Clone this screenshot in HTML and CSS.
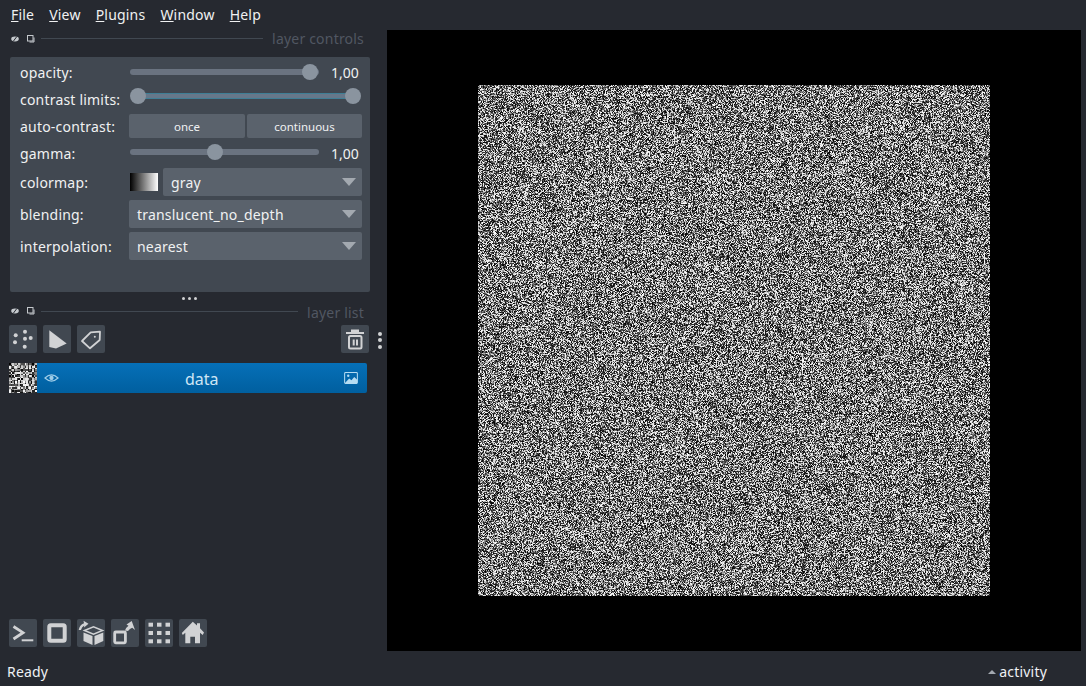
FILE: index.html
```html
<!DOCTYPE html>
<html lang="en">
<head>
<meta charset="utf-8">
<title>napari</title>
<link rel="stylesheet" href="styles.css">
</head>
<body>
<div class="app">
  <nav class="menubar">
    <span class="menu"><u>F</u>ile</span>
    <span class="menu"><u>V</u>iew</span>
    <span class="menu"><u>P</u>lugins</span>
    <span class="menu"><u>W</u>indow</span>
    <span class="menu"><u>H</u>elp</span>
  </nav>
  <div class="main">
    <aside class="side">
      <div class="dock-title controls-title">
        <svg class="mini" viewBox="0 0 8 8"><ellipse cx="4" cy="4" rx="3.8" ry="2.400" fill="#c4c8cc"/><path d="M2.500 6 5.500 2" stroke="#262930"/></svg>
        <svg class="mini" viewBox="0 0 8 8"><rect x=".5" y=".5" width="5.500" height="5.500" fill="none" stroke="#c4c8cc"/><path d="M7 2.500V7H2.500" fill="none" stroke="#c4c8cc"/></svg>
        <span class="rule"></span><span class="dock-label">layer controls</span>
      </div>
      <section class="controls">
        <div class="row r-op"><label>opacity:</label><div class="slider"><div class="track"></div><div class="handle" style="left:173px"></div></div><span class="val">1,00</span></div>
        <div class="row r-cl"><label>contrast limits:</label><div class="slider wide"><div class="track range"></div><div class="handle" style="left:1px"></div><div class="handle" style="left:216px"></div></div></div>
        <div class="row r-ac"><label>auto-contrast:</label><div class="btns"><button class="btn">once</button><button class="btn">continuous</button></div></div>
        <div class="row r-ga"><label>gamma:</label><div class="slider"><div class="track"></div><div class="handle" style="left:78px"></div></div><span class="val">1,00</span></div>
        <div class="row r-dd"><label>colormap:</label><div class="cmap"></div><div class="dd dd-cm">gray<i class="arrow"></i></div></div>
        <div class="row r-dd"><label>blending:</label><div class="dd">translucent_no_depth<i class="arrow"></i></div></div>
        <div class="row r-dd"><label>interpolation:</label><div class="dd">nearest<i class="arrow"></i></div></div>
      </section>
      <div class="handle-dots"><b></b><b></b><b></b></div>
      <div class="dock-title list-title">
        <svg class="mini" viewBox="0 0 8 8"><ellipse cx="4" cy="4" rx="3.8" ry="2.400" fill="#c4c8cc"/><path d="M2.500 6 5.500 2" stroke="#262930"/></svg>
        <svg class="mini" viewBox="0 0 8 8"><rect x=".5" y=".5" width="5.500" height="5.500" fill="none" stroke="#c4c8cc"/><path d="M7 2.500V7H2.500" fill="none" stroke="#c4c8cc"/></svg>
        <span class="rule"></span><span class="dock-label">layer list</span>
      </div>
      <div class="layer-tools">
        <button class="tool"><svg viewBox="0 0 28 28" fill="#d1d2d4"><circle cx="16" cy="6.700" r="2"/><circle cx="6.700" cy="10.300" r="2"/><circle cx="21.700" cy="13" r="2"/><circle cx="16" cy="13.700" r="2"/><circle cx="6" cy="17.300" r="2"/><circle cx="15.700" cy="21.700" r="2"/></svg></button>
        <button class="tool"><svg viewBox="0 0 28 28"><path d="M6.300 5.200 23.700 18.500 13 23.500 6.300 22z" fill="#d1d2d4"/></svg></button>
        <button class="tool"><svg viewBox="0 0 28 28" fill="none" stroke="#d1d2d4" stroke-width="1.800" stroke-linejoin="round"><path d="M5 16 13.700 7.300 23 6.700 22.700 15 13 23.300z"/><circle cx="17.800" cy="11.700" r="1" fill="#d1d2d4" stroke="none"/></svg></button>
        <button class="tool tool-del"><svg viewBox="0 0 28 28"><path d="M5 7h18v2h-18zM10 4.500h8v2.500h-8z" fill="#d1d2d4"/><rect x="8" y="11" width="12.500" height="12.500" rx="1.500" fill="none" stroke="#d1d2d4" stroke-width="2"/><path d="M11.700 14.500h2v6h-2zM15 14.500h2v6h-2z" fill="#d1d2d4"/></svg></button>
        <div class="vdots"><b></b><b></b><b></b></div>
      </div>
      <div class="layer">
        <canvas id="thumb" class="thumb" width="18" height="20"></canvas>
        <div class="layer-body">
          <svg class="eye" viewBox="0 0 16 10" fill="none" stroke="#9fcde8" stroke-width="1.200"><path d="M1 5Q8-1.500 15 5 8 11.500 1 5z"/><circle cx="8" cy="5" r="2.300" fill="#9fcde8" stroke="none"/></svg>
          <span class="layer-name">data</span>
          <svg class="imgicon" viewBox="0 0 15 13"><rect x=".6" y=".6" width="13.800" height="11.800" rx="1" fill="none" stroke="#b5dcf2" stroke-width="1.100"/><circle cx="4.500" cy="4" r="1.300" fill="#b5dcf2"/><path d="M1 12 5.500 7 8 9 11 5.500 14 8v4.500H1z" fill="#b5dcf2"/></svg>
        </div>
      </div>
      <div class="spacer"></div>
      <div class="viewer-tools">
        <button class="tool"><svg viewBox="0 0 28 28" fill="none" stroke="#d1d2d4"><path d="M4.500 7.500 14 13.700 4.500 20" stroke-width="2.800"/><path d="M12.700 21.300h11.600" stroke-width="2"/></svg></button>
        <button class="tool"><svg viewBox="0 0 28 28"><rect x="6.300" y="6.300" width="15.400" height="15.400" rx="1.500" fill="none" stroke="#d1d2d4" stroke-width="4"/></svg></button>
        <button class="tool"><svg viewBox="0 0 28 28"><path d="M7.500 11.500 16.500 7.800 25.500 11.500 16.500 15.200z" fill="none" stroke="#d1d2d4" stroke-width="1.500"/><path d="M6.500 13.500 15.500 17V26L6.500 22zM17.500 17 26.300 13.500V22L17.500 26z" fill="#d1d2d4"/><path d="M1.700 11Q2.500 6 7 4.300L6.500 1.800 11.500 4.800 7 8.500 7.300 6.500Q4.500 8 4 11z" fill="#d1d2d4"/></svg></button>
        <button class="tool"><svg viewBox="0 0 28 28"><rect x="3.700" y="13" width="10.700" height="10.800" rx="1" fill="none" stroke="#d1d2d4" stroke-width="2.800"/><path d="M14 11.500Q15 8.500 17.500 6.800L15.500 5.500 20.700 2 24 11 21.200 8.700Q18.800 9.800 17 12z" fill="#d1d2d4"/></svg></button>
        <button class="tool"><svg viewBox="0 0 28 28" fill="#d1d2d4"><rect x="3.500" y="3.700" width="4.500" height="4"/><rect x="12" y="3.700" width="4.500" height="4"/><rect x="20.500" y="3.700" width="4.500" height="4"/><rect x="3.500" y="12" width="4.500" height="4"/><rect x="12" y="12" width="4.500" height="4"/><rect x="20.500" y="12" width="4.500" height="4"/><rect x="3.500" y="20.300" width="4.500" height="4"/><rect x="12" y="20.300" width="4.500" height="4"/><rect x="20.500" y="20.300" width="4.500" height="4"/></svg></button>
        <button class="tool"><svg viewBox="0 0 28 28"><path d="M13.800 2.700 18 6.500V4.300H21V9.300L25 13.500 23.700 16 21 13.800V24.300H16V17.700H11.300V24.300H6.300V13.800L3.800 16 2.800 14Z" fill="#d1d2d4"/></svg></button>
      </div>
    </aside>
    <main class="viewer"><canvas id="noise" class="noise" width="512" height="511"></canvas></main>
  </div>
  <footer class="status"><span>Ready</span><span class="activity"><i class="up"></i>activity</span></footer>
</div>
<script src="app.js"></script>
</body>
</html>
```
FILE: styles.css
```css
* { box-sizing: border-box; }
html, body { margin: 0; height: 100%; }
body { background: #262930; color: #f0f1f2; font-family: "Noto Sans", sans-serif; font-size: 14px; letter-spacing: .2px; overflow: hidden; }
.app { width: 1086px; height: 686px; display: flex; flex-direction: column; }
.menubar { height: 29px; display: flex; padding: 0 0 1px 11px; gap: 15px; align-items: center; font-size: 14px; flex: none; }
.main { flex: 1; display: flex; min-height: 0; }
.side { width: 387px; flex: none; display: flex; flex-direction: column; }
.viewer { width: 694px; height: 621px; background: #000; display: flex; justify-content: center; padding-top: 55px; margin-top: 1px; }
.noise { display: block; width: 512px; height: 511px; image-rendering: pixelated; }
.dock-title { display: flex; align-items: center; padding: 0 23px 0 11px; flex: none; }
.controls-title { height: 19px; margin-bottom: 9px; }
.list-title { height: 14px; }
.list-title .dock-label { padding-top: 2px; }
.mini { width: 8px; height: 8px; margin-right: 8px; flex: none; }
.rule { flex: 1; height: 1px; background: #414851; margin: 0 9px 0 -2px; }
.dock-label { color: #515762; font-size: 14px; line-height: 19px; }
.controls { width: 360px; height: 235px; margin-left: 10px; background: #414851; border-radius: 2px; padding: 3px 8px 0 10px; flex: none; }
.row { display: flex; align-items: center; height: 24px; }
.row label { width: 109px; flex: none; white-space: nowrap; padding-top: 1px; }
.r-cl { margin-bottom: 6px; }
.r-cl label { padding-top: 7px; }
.r-ac label { padding-top: 0; }
.r-ga { height: 28px; margin-bottom: 2px; }
.r-ga label, .r-ga .val { padding-top: 3px; }
.r-dd { height: 28px; margin-bottom: 4px; }
.slider { position: relative; width: 190px; height: 16px; flex: none; }
.slider.wide { width: 233px; }
.track { position: absolute; left: 1px; right: 0; top: 5px; height: 6px; background: #6a7380; border-radius: 3px; }
.track.range { left: 8px; right: 8px; background: #66788a; border-radius: 0; box-shadow: inset 0 1px 0 #3f7f96, inset 0 -1px 0 #3f7f96; }
.handle { position: absolute; top: 0; width: 16px; height: 16px; border-radius: 50%; background: #8a949f; }
.val { margin-left: 12px; padding-top: 1px; letter-spacing: 0; }
.btns { display: grid; grid-template-columns: 116px 115px; gap: 2px; }
.btn { height: 24px; border: 0; border-radius: 2px; background: #5a626c; color: #f0f1f2; font: 11.500px "Noto Sans", sans-serif; letter-spacing: 0; padding: 0; }
.dd { position: relative; width: 233px; height: 28px; line-height: 29px; padding-left: 8px; background: #5a626c; border-radius: 2px; }
.dd-cm { width: 199px; }
.cmap { width: 28px; height: 18px; margin-left: 1px; margin-right: 5px; background: linear-gradient(90deg, #000, #fff); flex: none; }
.arrow { position: absolute; right: 6px; top: 10px; width: 0; height: 0; border-left: 7px solid transparent; border-right: 7px solid transparent; border-top: 8px solid #a3a9b0; }
.handle-dots { height: 12px; display: flex; justify-content: center; align-items: center; gap: 3px; padding-right: 8px; flex: none; }
.handle-dots b, .vdots b { display: block; width: 3px; height: 3px; border-radius: 50%; background: #d1d2d4; }
.layer-tools { display: flex; gap: 6px; padding: 7px 0 0 9px; height: 44px; align-items: flex-start; flex: none; }
.tool { width: 28px; height: 28px; border: 0; border-radius: 2px; background: #414851; padding: 0; display: block; flex: none; }
.tool svg { display: block; width: 28px; height: 28px; }
.tool-del { margin-left: auto; }
.vdots { width: 10px; margin-right: 2px; display: flex; flex-direction: column; gap: 2.500px; align-items: center; padding-top: 6.500px; }
.vdots b { width: 4px; height: 4px; }
.layer { display: flex; height: 30px; margin-left: 9px; width: 358px; margin-top: 1px; flex: none; }
.thumb { width: 28px; height: 30px; flex: none; image-rendering: pixelated; background: #000; }
.layer-body { flex: 1; display: flex; align-items: center; position: relative; background: linear-gradient(180deg, #0670b8, #005f9f); border-radius: 0 2px 2px 0; color: #cfe6f5; }
.eye { width: 15px; height: 10px; margin-left: 7px; }
.layer-name { position: absolute; left: 148px; top: 1px; font-size: 16px; line-height: 30px; letter-spacing: 0; }
.imgicon { position: absolute; right: 9px; top: 9px; width: 14px; height: 12px; }
.spacer { flex: 1; }
.viewer-tools { display: flex; gap: 6px; padding-left: 9px; height: 32px; flex: none; }
.status { height: 35px; flex: none; display: flex; justify-content: space-between; align-items: center; padding: 6px 39px 0 7px; color: #eef1f5; }
.activity { display: flex; align-items: center; }
.up { width: 0; height: 0; border-left: 4px solid transparent; border-right: 4px solid transparent; border-bottom: 4px solid #a3a9b0; margin-right: 3px; }
```
FILE: app.js
```js
function fill(id) {
  var c = document.getElementById(id), x = c.getContext("2d");
  var d = x.createImageData(c.width, c.height), s = 12345;
  function r() { s = (s * 1664525 + 1013904223) >>> 0; return (s >>> 8) / 16777216; }
  for (var i = 0; i < d.data.length; i += 4) {
    var p = r(), v = p < 0.42 ? r() * 80 : p < 0.7 ? 80 + r() * 110 : 200 + r() * 55;
    d.data[i] = d.data[i + 1] = d.data[i + 2] = v;
    d.data[i + 3] = 255;
  }
  x.putImageData(d, 0, 0);
}
fill("noise");
fill("thumb");
```
